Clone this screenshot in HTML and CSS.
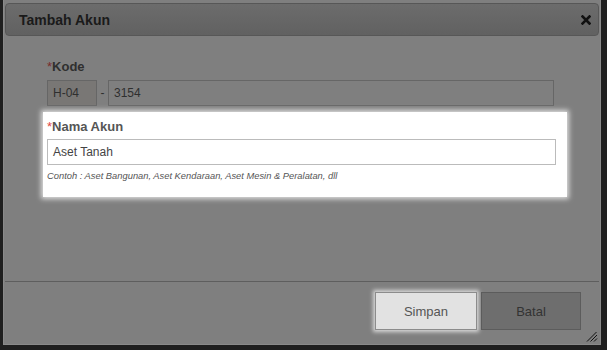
FILE: index.html
```html
<!DOCTYPE html>
<html>
<head>
<meta charset="utf-8">
<link rel="stylesheet" href="styles.css">
</head>
<body>
<div class="dialog">
  <div class="titlebar">
    <span class="title">Tambah Akun</span>
    <svg class="close" width="10" height="10" viewBox="0 0 10 10"><path d="M1.5 1.5 L8.5 8.5 M8.5 1.5 L1.5 8.5" stroke="#111" stroke-width="2.6" stroke-linecap="square"/></svg>
  </div>
  <div class="content">
    <div class="group">
      <div class="label"><span class="req">*</span>Kode</div>
      <div class="row">
        <div class="input prefix">H-04</div>
        <span class="dash">-</span>
        <div class="input code">3154</div>
      </div>
    </div>
    <div class="group highlight">
      <div class="label"><span class="req">*</span>Nama Akun</div>
      <div class="input name">Aset Tanah</div>
      <div class="hint">Contoh : Aset Bangunan, Aset Kendaraan, Aset Mesin &amp; Peralatan, dll</div>
    </div>
  </div>
  <div class="footer">
    <div class="btn primary">Simpan</div>
    <div class="btn cancel">Batal</div>
  </div>
  <svg class="grip" width="12" height="11" viewBox="0 0 12 11"><path d="M1 10.5 L10.5 1 M4.5 10.5 L11 4 M8 10.5 L11 7.5" stroke="#111" stroke-width="1"/></svg>
</div>
</body>
</html>
```
FILE: styles.css
```css
html, body {
  margin: 0;
  padding: 0;
}
body {
  background: #1f1f1f;
  width: 607px;
  height: 350px;
  overflow: hidden;
  font-family: "Liberation Sans", Arial, sans-serif;
}
.dialog {
  position: relative;
  margin-left: 3px;
  width: 598px;
  height: 345px;
  box-sizing: border-box;
  background: #7f7f7f;
  border: 1px solid #8a8a8a;
  border-top: none;
  padding: 3px 1px 0 1px;
  display: flex;
  flex-direction: column;
}
.titlebar {
  height: 33px;
  box-sizing: border-box;
  border: 1px solid #575757;
  border-radius: 4px;
  background: linear-gradient(#6c6c6c, #616161);
  display: flex;
  align-items: center;
  justify-content: space-between;
  padding: 0 7px 0 13px;
}
.title {
  font-size: 14px;
  font-weight: bold;
  color: #1a1a1a;
}
.close {
  display: block;
}
.content {
  height: 245px;
  box-sizing: border-box;
  padding: 23px 0 0 42px;
  display: flex;
  flex-direction: column;
  gap: 6px;
}
.label {
  font-size: 13px;
  font-weight: bold;
  color: #2f2f2f;
  line-height: 16px;
  height: 18px;
  margin-bottom: 3px;
}
.req {
  color: #7a2c2c;
  font-weight: normal;
}
.row {
  display: flex;
  align-items: center;
}
.input {
  height: 26px;
  box-sizing: border-box;
  border: 1px solid #666;
  font-size: 12px;
  color: #2f2f2f;
  padding: 0 5px;
  display: flex;
  align-items: center;
}
.prefix {
  width: 50px;
  background: #797775;
}
.dash {
  font-size: 12px;
  color: #2f2f2f;
  width: 11px;
  text-align: center;
}
.code {
  width: 446px;
}
.highlight {
  width: 524px;
  height: 85px;
  box-sizing: border-box;
  margin-left: -4px;
  padding: 7px 0 0 4px;
  background: #fff;
  box-shadow: 0 0 5px 2px rgba(255, 255, 255, 0.75);
}
.highlight .label {
  color: #555;
  margin-bottom: 2px;
}
.highlight .req {
  color: #e04545;
}
.name {
  width: 509px;
  border-color: #bbb;
  color: #444;
  background: #fff;
}
.hint {
  font-size: 9.35px;
  font-style: italic;
  color: #555;
  margin-top: 6px;
}
.footer {
  border-top: 1px solid #5e5e5e;
  padding: 10px 18px 0 0;
  display: flex;
  justify-content: flex-end;
  gap: 4px;
}
.btn {
  height: 38px;
  box-sizing: border-box;
  display: flex;
  align-items: center;
  justify-content: center;
  font-size: 13px;
}
.primary {
  width: 102px;
  background: #e2e2e2;
  border: 1px solid #8c8c8c;
  color: #555;
  box-shadow: 0 0 4px 2px rgba(255, 255, 255, 0.7);
}
.cancel {
  width: 100px;
  background: #6e6e6e;
  border: 1px solid #5c5c5c;
  color: #333;
}
.grip {
  position: absolute;
  right: 2px;
  bottom: 2px;
}
```
